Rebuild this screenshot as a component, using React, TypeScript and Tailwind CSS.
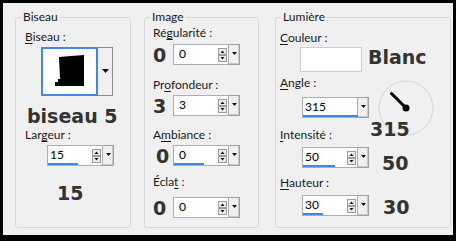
import React from 'react';

const ui = "font-['Segoe_UI',Lato,sans-serif] text-[12px] leading-4 text-[#1a1a1a]";
const big = "font-['DejaVu_Sans',Verdana,sans-serif] font-bold text-[19px] leading-[22px] text-[#333]";

const Label: React.FC<{ text: string; u: number; className?: string }> = ({ text, u, className }) => (
  <div className={`${ui} whitespace-nowrap ${className ?? ''}`}>
    {text.slice(0, u)}
    <span className="underline underline-offset-[2px]">{text[u]}</span>
    {text.slice(u + 1)}
  </div>
);

const Arrows = () => (
  <svg width="9" height="14" viewBox="0 0 9 14" className="shrink-0">
    <rect x="0.5" y="0.5" width="8" height="6" fill="#ececec" stroke="#9c9c9c" />
    <rect x="0.5" y="7.5" width="8" height="6" fill="#e6ecf2" stroke="#9c9c9c" />
    <polygon points="2.5,5 6.5,5 4.5,2.5" fill="#111" />
    <polygon points="2.5,9 6.5,9 4.5,11.5" fill="#111" />
  </svg>
);

const DropBtn = () => (
  <div className="flex w-[11px] items-center justify-center border-y border-r border-[#a0a0a0] bg-[#f0f0f0] shadow-[inset_-1px_-1px_0_#c8c8c8]">
    <svg width="5" height="3" viewBox="0 0 5 3" className="-mt-[2px]">
      <polygon points="0,0 5,0 2.5,3" fill="#111" />
    </svg>
  </div>
);

const Spin: React.FC<{ value: string; bar?: number; pad?: string }> = ({ value, bar, pad = 'pl-[3px]' }) => (
  <div className="flex h-[21px] w-[67px] shrink-0">
    <div className="flex w-[56px] items-center border border-[#abadb3] bg-white pr-[1px]">
      <div className="flex h-full flex-1 flex-col">
        <span className={`${ui} ${pad} pt-[1px] text-black`}>{value}</span>
        {bar ? <div className="mt-auto mb-[1px] h-[2px] shrink-0 bg-[#3c8be0]" style={{ width: bar }} /> : null}
      </div>
      <Arrows />
    </div>
    <DropBtn />
  </div>
);

const Group: React.FC<{ title: string; width: string; children: React.ReactNode }> = ({ title, width, children }) => (
  <fieldset className={`${width} h-[219px] shrink-0 rounded-[3px] border border-[#d9d9d9]`}>
    <legend className={`${ui} ml-[5px] px-[2px]`}>{title}</legend>
    {children}
  </fieldset>
);

const Dial = () => (
  <svg width="56" height="56" viewBox="0 0 56 56" className="absolute left-[102px] top-[8px]">
    <circle cx="28" cy="28" r="27" fill="none" stroke="#d6d6d6" />
    <line x1="13.5" y1="13.5" x2="28" y2="28" stroke="#000" strokeWidth="3" strokeLinecap="round" />
    <circle cx="28" cy="28" r="3.5" fill="#000" />
  </svg>
);

export default function App() {
  return (
    <div className="h-[241px] w-[456px] bg-black pl-[3px] pt-[3px]">
      <div className="flex h-[232px] w-[450px] bg-[#f0f0f0] pl-[12px] pt-[6px]">
        <Group title="Biseau" width="w-[116px]">
          <Label text="Biseau :" u={0} className="ml-[9px] mt-[4px]" />
          <div className="ml-[25px] mt-[2px] flex h-[49px]">
            <div className="w-[57px] border-2 border-[#3c8ce0] bg-white">
              <svg width="53" height="45" viewBox="0 0 53 45">
                <path d="M16 8 L41 6 L41 37 L12 37 L12 33 L15 33 L15 30 L17 30 Z" fill="#000" />
              </svg>
            </div>
            <div className="flex w-[15px] items-center justify-center border-y border-r border-[#8a8a8a] bg-[#f0f0f0]">
              <svg width="7" height="4" viewBox="0 0 7 4" className="-mt-[2px]">
                <polygon points="0,0 7,0 3.5,4" fill="#111" />
              </svg>
            </div>
          </div>
          <div className={`${big} ml-[11px] mt-[9px] whitespace-nowrap`}>biseau 5</div>
          <Label text="Largeur :" u={3} className="ml-[9px]" />
          <div className="ml-[31px] mt-[2px]">
            <Spin value="15" bar={30} pad="pl-[2px]" />
          </div>
          <div className={`${big} ml-[41px] mt-[16px]`}>15</div>
        </Group>

        <div className="w-[13px] shrink-0" />

        <Group title="Image" width="w-[115px]">
          <Label text="Régularité :" u={2} className="ml-[8px]" />
          <div className="ml-[8px] mt-[3px] flex h-[21px] items-center">
            <div className={`${big} w-[20px]`}>0</div>
            <Spin value="0" pad="pl-[5px]" />
          </div>
          <Label text="Profondeur :" u={2} className="ml-[8px] mt-[12px]" />
          <div className="ml-[8px] mt-[2px] flex h-[21px] items-center">
            <div className={`${big} w-[20px]`}>3</div>
            <Spin value="3" pad="pl-[5px]" />
          </div>
          <Label text="Ambiance :" u={1} className="ml-[8px] mt-[11px]" />
          <div className="ml-[8px] mt-[2px] flex h-[21px] items-center">
            <div className={`${big} w-[20px] pl-[3px]`}>0</div>
            <div className="flex">
              <Spin value="0" bar={30} pad="pl-[5px]" />
            </div>
          </div>
          <Label text="Éclat :" u={4} className="ml-[8px] mt-[8px]" />
          <div className="ml-[8px] mt-[7px] flex h-[21px] items-center">
            <div className={`${big} w-[20px]`}>0</div>
            <Spin value="0" pad="pl-[5px]" />
          </div>
        </Group>

        <div className="w-[16px] shrink-0" />

        <Group title="Lumière" width="w-[176px]">
          <Label text="Couleur :" u={0} className="ml-[4px] mt-[5px]" />
          <div className="mt-[1px] flex h-[25px] items-start">
            <div className="ml-[24px] h-[25px] w-[62px] border border-[#cfcfcf] bg-white" />
            <div className={`${big} -mt-[1px] ml-[6px]`}>Blanc</div>
          </div>
          <div className="relative">
            <Label text="Angle :" u={0} className="ml-[4px] pt-[3px]" />
            <div className="ml-[26px] mt-[6px]">
              <Spin value="315" bar={57} pad="pl-[2px]" />
            </div>
            <Dial />
          </div>
          <div className="relative flex items-start">
            <div className="w-[94px] pl-[4px]">
              <Label text="Intensité :" u={0} className="mt-[9px]" />
            </div>
            <div className={big}>315</div>
          </div>
          <div className="mt-[4px] flex h-[21px] items-start">
            <div className="ml-[26px]">
              <Spin value="50" bar={32} pad="pl-[2px]" />
            </div>
            <div className={`${big} ml-[13px] mt-[5px]`}>50</div>
          </div>
          <Label text="Hauteur :" u={0} className="ml-[4px] mt-[7px]" />
          <div className="mt-[4px] flex h-[21px] items-start">
            <div className="ml-[26px]">
              <Spin value="30" bar={20} pad="pl-[2px]" />
            </div>
            <div className={`${big} ml-[14px] mt-[1px]`}>30</div>
          </div>
        </Group>
      </div>
    </div>
  );
}
